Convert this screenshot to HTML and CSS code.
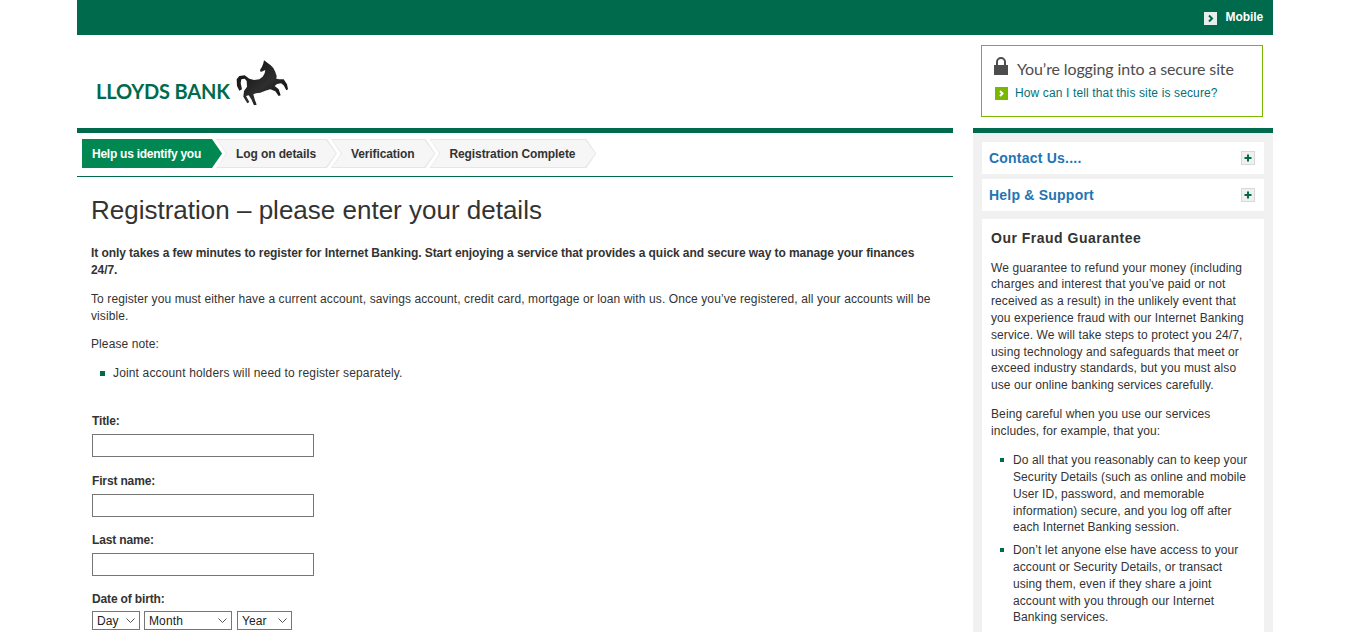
FILE: index.html
```html
<!DOCTYPE html>
<html lang="en">
<head>
<meta charset="utf-8">
<title>Lloyds Bank - Registration</title>
<link rel="stylesheet" href="styles.css">
</head>
<body>
<div class="page">
  <div class="topbar">
    <a class="mobile-link">
      <svg class="mobile-icon" viewBox="0 0 13 13" width="13" height="13"><rect width="13" height="13" fill="#e8eeec"/><path d="M5 3.5L8 6.5L5 9.5" fill="none" stroke="#006a4d" stroke-width="2"/></svg>
      <span>Mobile</span>
    </a>
  </div>
  <header class="header">
    <div class="logo">
      <span class="logo-text">LLOYDS BANK</span>
      <svg class="horse" viewBox="0 0 180 162" width="60" height="54">
        <defs><linearGradient id="hg" x1="0" y1="0" x2="1" y2="1"><stop offset="0" stop-color="#0a0a0a"/><stop offset=".55" stop-color="#2e2e2e"/><stop offset="1" stop-color="#050505"/></linearGradient></defs>
        <path fill="url(#hg)" d="M96 13L106 20L116 28L124 36L130 48L134 60L133 68L142 70L155 70L165 85L168 100L163 103L155 88L147 82L135 84L128 90L140 100L146 118L140 120L130 106L115 100L100 104L85 110L72 112L64 115L68 130L74 146L66 148L58 130L50 118L42 120L52 138L46 142L34 122L36 105L45 92L44 75L38 68L28 70L26 82L30 100L22 104L15 90L14 70L22 60L38 58L52 68L66 72L82 70L92 62L98 52L100 42L92 46L86 48L84 42L90 32L94 22Z"/>
      </svg>
    </div>
    <div class="secure">
      <div class="secure-title">
        <svg viewBox="0 0 14 18" width="14" height="18"><path d="M0 8H14V18H0Z" fill="#4d4d4d"/><path d="M3 8V5A4 4 0 0 1 11 5V8" fill="none" stroke="#4d4d4d" stroke-width="2"/></svg>
        <span>You’re logging into a secure site</span>
      </div>
      <a class="secure-link">
        <svg viewBox="0 0 13 13" width="13" height="13"><rect width="13" height="13" fill="#7ab800"/><path d="M5 4L7.5 6.5L5 9" fill="none" stroke="#fff" stroke-width="2"/></svg>
        <span>How can I tell that this site is secure?</span>
      </a>
    </div>
  </header>
  <div class="columns">
    <main class="main">
      <ol class="steps">
        <li class="step active"><span>Help us identify you</span></li>
        <li class="step"><span>Log on details</span></li>
        <li class="step"><span>Verification</span></li>
        <li class="step"><span>Registration Complete</span></li>
      </ol>
      <div class="content">
        <h1>Registration – please enter your details</h1>
        <p class="strong">It only takes a few minutes to register for Internet Banking. Start enjoying a service that provides a quick and secure way to manage your finances 24/7.</p>
        <p>To register you must either have a current account, savings account, credit card, mortgage or loan with us. Once you’ve registered, all your accounts will be visible.</p>
        <p>Please note:</p>
        <ul class="bullets">
          <li>Joint account holders will need to register separately.</li>
        </ul>
        <form class="form">
          <div class="field"><label for="t">Title:</label><input id="t" type="text"></div>
          <div class="field"><label for="f">First name:</label><input id="f" type="text"></div>
          <div class="field"><label for="l">Last name:</label><input id="l" type="text"></div>
          <div class="field">
            <label>Date of birth:</label>
            <div class="dob">
              <select class="day"><option>Day</option></select>
              <select class="month"><option>Month</option></select>
              <select class="year"><option>Year</option></select>
            </div>
          </div>
        </form>
      </div>
    </main>
    <aside class="side">
      <div class="acc">
        <span>Contact Us....</span>
        <svg viewBox="0 0 14 14" width="14" height="14"><rect x=".5" y=".5" width="13" height="13" fill="#f0f0f0" stroke="#d8d8d8"/><path d="M7 3.5V10.5M3.5 7H10.5" stroke="#006a4d" stroke-width="2"/></svg>
      </div>
      <div class="acc">
        <span>Help &amp; Support</span>
        <svg viewBox="0 0 14 14" width="14" height="14"><rect x=".5" y=".5" width="13" height="13" fill="#f0f0f0" stroke="#d8d8d8"/><path d="M7 3.5V10.5M3.5 7H10.5" stroke="#006a4d" stroke-width="2"/></svg>
      </div>
      <section class="fraud">
        <h2>Our Fraud Guarantee</h2>
        <p>We guarantee to refund your money (including charges and interest that you’ve paid or not received as a result) in the unlikely event that you experience fraud with our Internet Banking service. We will take steps to protect you 24/7, using technology and safeguards that meet or exceed industry standards, but you must also use our online banking services carefully.</p>
        <p>Being careful when you use our services includes, for example, that you:</p>
        <ul class="bullets side-bullets">
          <li>Do all that you reasonably can to keep your Security Details (such as online and mobile User ID, password, and memorable information) secure, and you log off after each Internet Banking session.</li>
          <li>Don’t let anyone else have access to your account or Security Details, or transact using them, even if they share a joint account with you through our Internet Banking services.</li>
        </ul>
      </section>
    </aside>
  </div>
</div>
</body>
</html>
```
FILE: styles.css
```css
* { box-sizing: border-box; }
html, body { margin: 0; padding: 0; background: #fff; }
body {
  font-family: "Liberation Sans", Arial, sans-serif;
  font-size: 12px;
  line-height: 1.4;
  letter-spacing: .1px;
  color: #333;
}
.page {
  width: 1196px;
  height: 632px;
  margin-left: 77px;
  overflow: hidden;
}
.topbar {
  height: 35px;
  background: #006a4d;
  display: flex;
  justify-content: flex-end;
  align-items: center;
  padding-right: 10px;
}
.mobile-link {
  display: flex;
  align-items: center;
  gap: 9px;
  color: #fff;
  font-weight: bold;
  letter-spacing: -.1px;
}
.mobile-icon { margin-top: 2px; }
.header {
  height: 93px;
  display: flex;
  justify-content: space-between;
  padding: 10px 10px 0 19px;
}
.logo {
  display: flex;
  align-items: flex-end;
  height: 65px;
  gap: 2px;
}
.logo-text {
  font-family: "Lato", sans-serif;
  font-weight: 700;
  font-size: 20px;
  line-height: 1;
  color: #006a4d;
  letter-spacing: -.15px;
  padding-bottom: 9px;
}
.horse { display: block; }
.secure {
  width: 282px;
  height: 72px;
  border: 1px solid #7ab800;
  padding: 11px 0 0 12px;
}
.secure-title {
  display: flex;
  align-items: center;
  gap: 9px;
  height: 20px;
  font-family: "Lato", sans-serif;
  font-size: 16px;
  letter-spacing: -.12px;
  color: #4d4d4d;
}
.secure-title span { padding-top: 4px; }
.secure-title svg { margin-top: -2px; }
.secure-link {
  display: flex;
  align-items: center;
  gap: 7px;
  margin: 8px 0 0 1px;
  color: #00717a;
  letter-spacing: .13px;
}
.columns {
  display: grid;
  grid-template-columns: 876px 300px;
  gap: 20px;
}
.main { border-top: 5px solid #006a4d; }
.steps {
  list-style: none;
  margin: 0;
  padding: 6px 0 8px 5px;
  display: flex;
  border-bottom: 1px solid #006a4d;
}
.step {
  position: relative;
  height: 29px;
  padding: 1px 21px 0 20px;
  margin-right: -6px;
  display: flex;
  align-items: center;
  font-weight: bold;
  letter-spacing: -.1px;
  background: #e6e6e6;
  clip-path: polygon(0 0, calc(100% - 10px) 0, 100% 50%, calc(100% - 10px) 100%, 0 100%, 10px 50%);
}
.step::before {
  content: "";
  position: absolute;
  inset: 1px;
  background: #f6f6f6;
  clip-path: polygon(0 0, calc(100% - 10px) 0, 100% 50%, calc(100% - 10px) 100%, 0 100%, 10px 50%);
}
.step span { position: relative; }
.step.active {
  background: #008752;
  color: #fff;
  padding-left: 10px;
  letter-spacing: -.25px;
  clip-path: polygon(0 0, calc(100% - 10px) 0, 100% 50%, calc(100% - 10px) 100%, 0 100%);
}
.step.active::before { display: none; }
.content { padding: 0 20px 0 14px; }
h1 {
  font-size: 26px;
  font-weight: normal;
  letter-spacing: 0;
  line-height: 32px;
  margin: 17px 0 19px;
  color: #333;
}
p { margin: 0 0 12px; }
.strong { font-weight: bold; letter-spacing: -.07px; margin-bottom: 12.3px; }
.bullets {
  list-style: none;
  margin: 0;
  padding: 0 0 0 9px;
  letter-spacing: .15px;
}
.bullets li {
  display: flex;
  gap: 8px;
  margin-bottom: 6px;
}
.bullets li::before {
  content: "";
  flex: none;
  width: 5px;
  height: 5px;
  margin-top: 6px;
  background: #006a4d;
}
.form { margin-top: 31px; padding-left: 1px; }
.field { margin-bottom: 15px; }
.field:first-child { margin-bottom: 16px; }
.field label {
  display: block;
  height: 17px;
  font-weight: bold;
  letter-spacing: -.15px;
  margin-bottom: 4px;
}
.field input {
  display: block;
  width: 222px;
  height: 23px;
  border: 1px solid #767676;
  background: #fff;
  margin: 0;
}
.dob { display: flex; gap: 4px; margin-top: -1px; }
.dob select {
  appearance: none;
  height: 19px;
  padding: 0 0 0 4px;
  font-family: "Liberation Sans", Arial, sans-serif;
  font-size: 12px;
  letter-spacing: .12px;
  color: #222;
  border: 1px solid #767676;
  border-radius: 0;
  margin: 0;
  background: #fff url("data:image/svg+xml,%3Csvg xmlns='http://www.w3.org/2000/svg' width='9' height='5'%3E%3Cpath d='M.5.5L4.5 4.5L8.5.5' fill='none' stroke='%23555' stroke-width='1'/%3E%3C/svg%3E") no-repeat right 4px center;
}
.day { width: 48px; }
.month { width: 88px; }
.year { width: 55px; margin-left: 1px !important; }
.side {
  border-top: 5px solid #006a4d;
  background: #f1f1f1;
  padding: 9px;
  min-height: 600px;
}
.acc {
  height: 32px;
  background: #fff;
  margin-bottom: 5px;
  padding: 1px 9px 0 7px;
  display: flex;
  justify-content: space-between;
  align-items: center;
  font-size: 14px;
  font-weight: bold;
  color: #1f74b4;
  letter-spacing: .22px;
}
.acc svg { margin-top: -1px; }
.fraud {
  background: #fff;
  margin-top: 8px;
  padding: 10px 12px 40px 9px;
}
.fraud h2 {
  font-size: 14px;
  line-height: 18px;
  margin: 0 0 12.7px;
  letter-spacing: .5px;
  color: #333;
}
.fraud p { margin-bottom: 12.3px; }
.side-bullets { padding-left: 9px; letter-spacing: .08px; }
.side-bullets li { gap: 9px; }
.side-bullets li::before { width: 4px; height: 4px; margin-top: 6px; }
```
